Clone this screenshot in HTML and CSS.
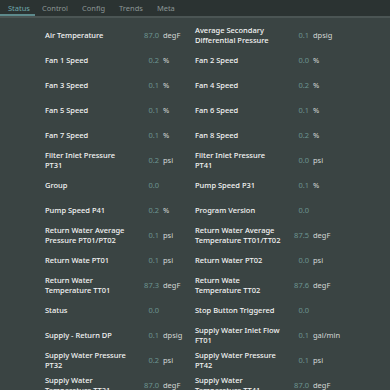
FILE: index.html
```html
<!DOCTYPE html>
<html lang="en">
<head>
  <meta charset="UTF-8">
  <meta name="viewport" content="width=device-width, initial-scale=1.0">
  <title>Status</title>
  <link rel="stylesheet" href="styles.css">
</head>
<body>
  <div class="tabs">
    <div class="tab active">Status</div>
    <div class="tab">Control</div>
    <div class="tab">Config</div>
    <div class="tab">Trends</div>
    <div class="tab">Meta</div>
  </div>

  <div class="panel">
    <div class="grid">
      <div class="item"><span class="label">Air Temperature</span><span class="value">87.0</span><span class="unit">degF</span></div>
      <div class="item"><span class="label">Average Secondary Differential Pressure</span><span class="value">0.1</span><span class="unit">dpsig</span></div>

      <div class="item"><span class="label">Fan 1 Speed</span><span class="value">0.2</span><span class="unit">%</span></div>
      <div class="item"><span class="label">Fan 2 Speed</span><span class="value">0.0</span><span class="unit">%</span></div>

      <div class="item"><span class="label">Fan 3 Speed</span><span class="value">0.1</span><span class="unit">%</span></div>
      <div class="item"><span class="label">Fan 4 Speed</span><span class="value">0.2</span><span class="unit">%</span></div>

      <div class="item"><span class="label">Fan 5 Speed</span><span class="value">0.1</span><span class="unit">%</span></div>
      <div class="item"><span class="label">Fan 6 Speed</span><span class="value">0.1</span><span class="unit">%</span></div>

      <div class="item"><span class="label">Fan 7 Speed</span><span class="value">0.1</span><span class="unit">%</span></div>
      <div class="item"><span class="label">Fan 8 Speed</span><span class="value">0.2</span><span class="unit">%</span></div>

      <div class="item"><span class="label">Filter Inlet Pressure PT31</span><span class="value">0.2</span><span class="unit">psi</span></div>
      <div class="item"><span class="label">Filter Inlet Pressure PT41</span><span class="value">0.0</span><span class="unit">psi</span></div>

      <div class="item"><span class="label">Group</span><span class="value">0.0</span><span class="unit"></span></div>
      <div class="item"><span class="label">Pump Speed P31</span><span class="value">0.1</span><span class="unit">%</span></div>

      <div class="item"><span class="label">Pump Speed P41</span><span class="value">0.2</span><span class="unit">%</span></div>
      <div class="item"><span class="label">Program Version</span><span class="value">0.0</span><span class="unit"></span></div>

      <div class="item"><span class="label">Return Water Average Pressure PT01/PT02</span><span class="value">0.1</span><span class="unit">psi</span></div>
      <div class="item"><span class="label">Return Water Average Temperature TT01/TT02</span><span class="value">87.5</span><span class="unit">degF</span></div>

      <div class="item"><span class="label">Return Wate PT01</span><span class="value">0.1</span><span class="unit">psi</span></div>
      <div class="item"><span class="label">Return Water PT02</span><span class="value">0.0</span><span class="unit">psi</span></div>

      <div class="item"><span class="label">Return Water Temperature TT01</span><span class="value">87.3</span><span class="unit">degF</span></div>
      <div class="item"><span class="label">Return Wate Temperature TT02</span><span class="value">87.6</span><span class="unit">degF</span></div>

      <div class="item"><span class="label">Status</span><span class="value">0.0</span><span class="unit"></span></div>
      <div class="item"><span class="label">Stop Button Triggered</span><span class="value">0.0</span><span class="unit"></span></div>

      <div class="item"><span class="label">Supply - Return DP</span><span class="value">0.1</span><span class="unit">dpsig</span></div>
      <div class="item"><span class="label">Supply Water Inlet Flow FT01</span><span class="value">0.1</span><span class="unit">gal/min</span></div>

      <div class="item"><span class="label">Supply Water Pressure PT32</span><span class="value">0.2</span><span class="unit">psi</span></div>
      <div class="item"><span class="label">Supply Water Pressure PT42</span><span class="value">0.1</span><span class="unit">psi</span></div>

      <div class="item"><span class="label">Supply Water Temperature TT31</span><span class="value">87.0</span><span class="unit">degF</span></div>
      <div class="item"><span class="label">Supply Water Temperature TT41</span><span class="value">87.0</span><span class="unit">degF</span></div>
    </div>
  </div>
</body>
</html>
```

FILE: styles.css
```css
html, body {
  margin: 0;
  height: 100%;
  overflow: hidden;
}
body {
  font-family: "Noto Sans", "Open Sans", sans-serif;
  font-size: 7.5px;
  background-color: #3a4443;
  color: #f4f4f4;
  display: flex;
  flex-direction: column;
}
.tabs {
  display: flex;
  height: 16px;
  background-color: #2b3332;
  border-bottom: 2px solid #4b5554;
}
.tab {
  padding: 0 7px;
  line-height: 16px;
  color: #8c9695;
}
.tab.active {
  color: #6fa9ad;
  padding: 0 5px 0 8px;
  box-shadow: inset 0 -2px 0 #5d8a8c;
}
.panel {
  flex: 1;
  margin-top: 4px;
  overflow-y: scroll;
}
.panel::-webkit-scrollbar {
  width: 5px;
}
.panel::-webkit-scrollbar-track {
  background: #f2f2f2;
  border-left: 1px solid #2e3635;
}
.panel::-webkit-scrollbar-thumb {
  background: #a3a3a3;
  border-left: 2px solid #f2f2f2;
}
.grid {
  display: grid;
  grid-template-columns: 150px 150px;
  grid-auto-rows: 25px;
  padding: 0 0 46px 45px;
}
.item {
  display: grid;
  grid-template-columns: 86px 24px 40px;
  column-gap: 4px;
  align-items: center;
  line-height: 10px;
}
.label {
  font-weight: 500;
}
.value {
  text-align: right;
  white-space: nowrap;
  color: #6c9491;
}
.unit {
  color: #d4d8d7;
}
```
